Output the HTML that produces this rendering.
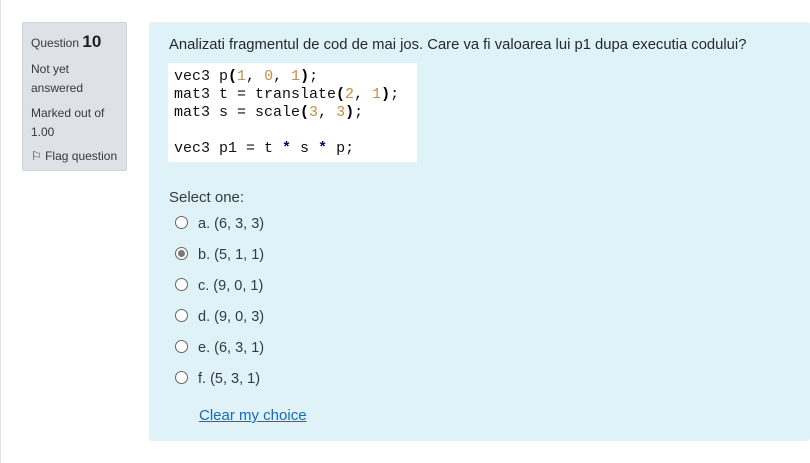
<!DOCTYPE html>
<html><head><style>
body{margin:0;width:810px;height:463px;background:#fff;font-family:"Liberation Sans",sans-serif;color:#1d2125;position:relative;overflow:hidden}
.vl{position:absolute;left:0;top:0;width:1px;height:463px;background:#dee2e6}
.info{position:absolute;left:22px;top:22px;width:103px;height:147px;background:#dee2e6;border:1px solid #cfd4d9;border-radius:2px;font-size:12px;color:#343a40}
.info div{position:absolute;left:8px}
.q{position:absolute;left:149px;top:22px;width:661px;height:419px;background:#def2f8;border-radius:3px}
.qt{position:absolute;left:20px;top:15px;font-size:14.8px;color:#24292e;white-space:nowrap}
.code{position:absolute;left:19px;top:41px;width:249px;height:99px;background:#fff;font-family:"Liberation Mono",monospace;font-size:15px;line-height:18px;color:#111;white-space:pre;padding:5px 0 0 6px;box-sizing:border-box}
.n{color:#d08b3a}.b{color:#000;font-weight:bold}.s{color:#000080;font-weight:bold}
.sel{position:absolute;left:20px;top:167px;font-size:15px;color:#343a40}
.opt{position:absolute;left:26px;font-size:14.5px;color:#343a40;white-space:nowrap}
.r{display:inline-block;width:11px;height:11px;border:1px solid #666;border-radius:50%;background:#fff;vertical-align:-1px;margin-right:10px;position:relative}
.r.on::after{content:"";position:absolute;left:2px;top:2px;width:7px;height:7px;border-radius:50%;background:#777}
.clr{position:absolute;left:50px;top:385px;font-size:15px;color:#0f6cbf;text-decoration:underline}
</style></head><body>
<div class="vl"></div>
<div class="info">
<div style="top:9px">Question <b style="font-size:17px;color:#1d2125">10</b></div>
<div style="top:37px;line-height:19px">Not yet<br>answered</div>
<div style="top:81px;line-height:19px">Marked out of<br>1.00</div>
<div style="top:126px">⚐ Flag question</div>
</div>
<div class="q">
<div class="qt">Analizati fragmentul de cod de mai jos. Care va fi valoarea lui p1 dupa executia codului?</div>
<div class="code">vec3 p<span class="b">(</span><span class="n">1</span>, <span class="n">0</span>, <span class="n">1</span><span class="b">)</span>;
mat3 t = translate<span class="b">(</span><span class="n">2</span>, <span class="n">1</span><span class="b">)</span>;
mat3 s = scale<span class="b">(</span><span class="n">3</span>, <span class="n">3</span><span class="b">)</span>;

vec3 p1 = t <span class="s">*</span> s <span class="s">*</span> p;</div>
<div class="sel">Select one:</div>
<div class="opt" style="top:194px"><span class="r"></span>a. (6, 3, 3)</div>
<div class="opt" style="top:225px"><span class="r on"></span>b. (5, 1, 1)</div>
<div class="opt" style="top:256px"><span class="r"></span>c. (9, 0, 1)</div>
<div class="opt" style="top:287px"><span class="r"></span>d. (9, 0, 3)</div>
<div class="opt" style="top:318px"><span class="r"></span>e. (6, 3, 1)</div>
<div class="opt" style="top:349px"><span class="r"></span>f. (5, 3, 1)</div>
<div class="clr">Clear my choice</div>
</div>
</body></html>
